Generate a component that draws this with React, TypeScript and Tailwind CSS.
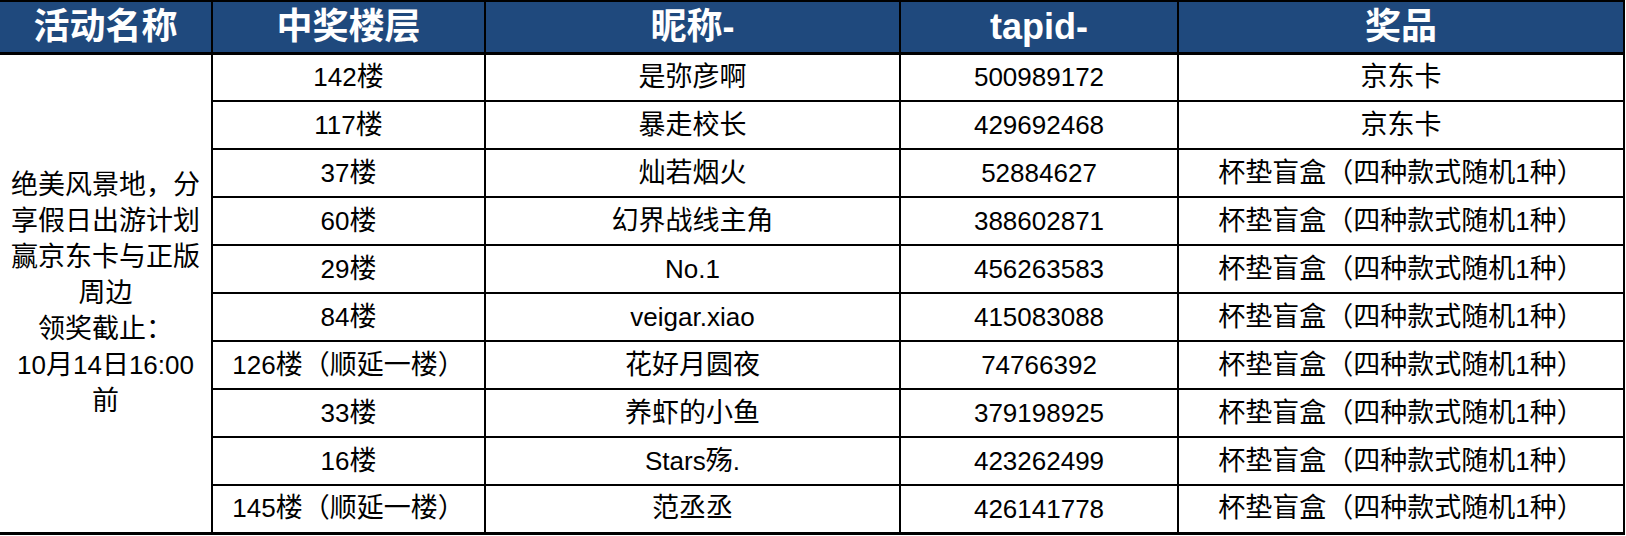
import React from "react";

const rows: [string, string, string, string][] = [
  ["142楼", "是弥彦啊", "500989172", "京东卡"],
  ["117楼", "暴走校长", "429692468", "京东卡"],
  ["37楼", "灿若烟火", "52884627", "杯垫盲盒（四种款式随机1种）"],
  ["60楼", "幻界战线主角", "388602871", "杯垫盲盒（四种款式随机1种）"],
  ["29楼", "No.1", "456263583", "杯垫盲盒（四种款式随机1种）"],
  ["84楼", "veigar.xiao", "415083088", "杯垫盲盒（四种款式随机1种）"],
  ["126楼（顺延一楼）", "花好月圆夜", "74766392", "杯垫盲盒（四种款式随机1种）"],
  ["33楼", "养虾的小鱼", "379198925", "杯垫盲盒（四种款式随机1种）"],
  ["16楼", "Stars殇.", "423262499", "杯垫盲盒（四种款式随机1种）"],
  ["145楼（顺延一楼）", "范丞丞", "426141778", "杯垫盲盒（四种款式随机1种）"],
];

function Mixed({ text }: { text: string }) {
  const parts = text.match(/[\x00-\x7f]+|[^\x00-\x7f]+/g) || [];
  return (
    <>
      {parts.map((p, i) =>
        /^[\x00-\x7f]+$/.test(p) ? (
          <span key={i}>{p}</span>
        ) : (
          <span key={i} className="text-[27px]">
            {p}
          </span>
        )
      )}
    </>
  );
}

export default function App() {
  const headers = ["活动名称", "中奖楼层", "昵称-", "tapid-", "奖品"];
  const leftLines = [
    "绝美风景地，分",
    "享假日出游计划",
    "赢京东卡与正版",
    "周边",
    "领奖截止：",
    "10月14日16:00",
    "前",
  ];
  return (
    <div className="w-[1626px] h-[536px] bg-white overflow-hidden font-['Liberation_Sans','Noto_Sans_CJK_SC',sans-serif]">
      <table className="table-fixed border-collapse w-[1625px] text-black">
        <colgroup>
          <col className="w-[212px]" />
          <col className="w-[273px]" />
          <col className="w-[415px]" />
          <col className="w-[278px]" />
          <col />
        </colgroup>
        <thead>
          <tr className="h-[52px] bg-[#1f497d]">
            {headers.map((h, i) => (
              <th
                key={h}
                className={`border-t-2 border-b-[3px] border-r-2 border-black text-white text-[36px] font-bold leading-none p-0 text-center ${
                  i === 0 ? "border-l-0" : "border-l-2"
                }`}
              >
                {h}
              </th>
            ))}
          </tr>
        </thead>
        <tbody>
          {rows.map((r, ri) => (
            <tr key={ri} className="h-[48px]">
              {ri === 0 && (
                <td
                  rowSpan={rows.length}
                  className="border-r-2 border-b-[3px] border-black text-[26px] leading-[36px] text-center align-middle p-0"
                >
                  {leftLines.map((l) => (
                    <div key={l} className="whitespace-nowrap">
                      <Mixed text={l} />
                    </div>
                  ))}
                </td>
              )}
              {r.map((c, ci) => (
                <td
                  key={ci}
                  className={`border-2 border-black text-[26px] leading-none text-center align-middle p-0 whitespace-nowrap ${
                    ri === rows.length - 1 ? "border-b-[3px]" : ""
                  }`}
                >
                  <Mixed text={c} />
                </td>
              ))}
            </tr>
          ))}
        </tbody>
      </table>
    </div>
  );
}
